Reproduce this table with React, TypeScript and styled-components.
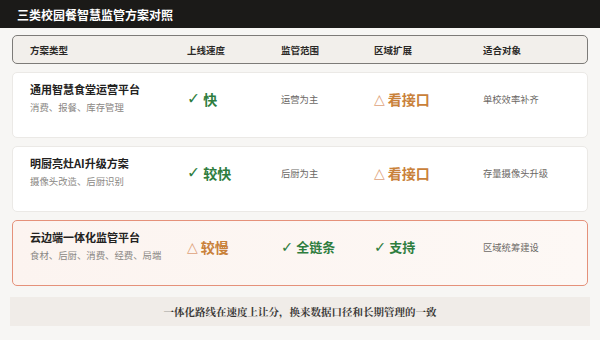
import React from "react";
import styled, { createGlobalStyle } from "styled-components";

const Global = createGlobalStyle`
  html, body { margin: 0; padding: 0; background: #f7f6f4; }
  body { font-family: "Noto Sans CJK SC", "Noto Sans", sans-serif; }
`;

const Page = styled.div`
  width: 600px;
  height: 340px;
  background: #f7f6f4;
  display: flex;
  flex-direction: column;
  overflow: hidden;
`;

const TitleBar = styled.div`
  height: 28px;
  background: #1b1a18;
  color: #ffffff;
  font-size: 12px;
  font-weight: 700;
  display: flex;
  align-items: center;
  padding-left: 17px;
`;

const Body = styled.div`
  display: flex;
  flex-direction: column;
  gap: 8px;
  padding: 7px 12px 0 12px;
`;

const cols = "157px 94px 93px 109px 1fr";

const HeaderRow = styled.div`
  display: grid;
  grid-template-columns: ${cols};
  align-items: center;
  height: 29px;
  box-sizing: border-box;
  padding-left: 17px;
  background: #f2efeb;
  border: 1.5px solid #7d7b78;
  border-radius: 5px;
  font-size: 9.5px;
  font-weight: 700;
  color: #2a2826;
`;

const Row = styled.div<{ $highlight?: boolean }>`
  display: grid;
  grid-template-columns: ${cols};
  align-items: start;
  height: 66px;
  box-sizing: border-box;
  padding: 9px 0 0 17px;
  background: ${(p) =>
    p.$highlight ? "linear-gradient(90deg, #fcf4f0, #fdf8f5)" : "#ffffff"};
  border: ${(p) => (p.$highlight ? "1.5px solid #e5917a" : "1px solid #ebe9e6")};
  border-radius: 5px;
`;

const NameCell = styled.div`
  display: flex;
  flex-direction: column;
  gap: 4px;
`;

const Name = styled.div`
  font-size: 11px;
  font-weight: 700;
  color: #222120;
  line-height: 15px;
`;

const Sub = styled.div`
  font-size: 9.4px;
  color: #8a8784;
  line-height: 13px;
`;

const Status = styled.div<{ $tone: "good" | "warn"; $small?: boolean }>`
  font-size: ${(p) => (p.$small ? "13px" : "14px")};
  font-weight: 700;
  line-height: 20px;
  margin-top: 7px;
  color: ${(p) => (p.$tone === "good" ? "#2e7d3e" : "#c9813a")};
  display: flex;
  align-items: center;
  gap: 3px;
`;

const Mark = styled.span<{ $tone: "good" | "warn" }>`
  font-family: "DejaVu Sans", sans-serif;
  font-weight: ${(p) => (p.$tone === "good" ? 700 : 400)};
  font-size: ${(p) => (p.$tone === "good" ? "1.12em" : "1em")};
  color: ${(p) => (p.$tone === "good" ? "#2e7d3e" : "#dea27a")};
`;

const Plain = styled.div`
  font-size: 9.3px;
  color: #6b6865;
  line-height: 20px;
  margin-top: 7px;
`;

const Footer = styled.div`
  margin: 11px 10px 0 10px;
  height: 29px;
  background: #f0ece8;
  display: flex;
  align-items: center;
  justify-content: center;
  font-family: "Noto Serif CJK SC", "Liberation Serif", serif;
  font-size: 10.5px;
  font-weight: 700;
  color: #3a3836;
`;

type Cell =
  | { kind: "good" | "warn"; text: string; small?: boolean }
  | { kind: "plain"; text: string };

const renderCell = (c: Cell, i: number) =>
  c.kind === "plain" ? (
    <Plain key={i}>{c.text}</Plain>
  ) : (
    <Status key={i} $tone={c.kind} $small={c.small}>
      <Mark $tone={c.kind}>{c.kind === "good" ? "✓" : "△"}</Mark>
      {c.text}
    </Status>
  );

const rows: { name: string; sub: string; cells: Cell[]; hl?: boolean }[] = [
  {
    name: "通用智慧食堂运营平台",
    sub: "消费、报餐、库存管理",
    cells: [
      { kind: "good", text: "快" },
      { kind: "plain", text: "运营为主" },
      { kind: "warn", text: "看接口" },
      { kind: "plain", text: "单校效率补齐" },
    ],
  },
  {
    name: "明厨亮灶AI升级方案",
    sub: "摄像头改造、后厨识别",
    cells: [
      { kind: "good", text: "较快" },
      { kind: "plain", text: "后厨为主" },
      { kind: "warn", text: "看接口" },
      { kind: "plain", text: "存量摄像头升级" },
    ],
  },
  {
    name: "云边端一体化监管平台",
    sub: "食材、后厨、消费、经费、局端",
    hl: true,
    cells: [
      { kind: "warn", text: "较慢" },
      { kind: "good", text: "全链条", small: true },
      { kind: "good", text: "支持", small: true },
      { kind: "plain", text: "区域统筹建设" },
    ],
  },
];

export default function App() {
  return (
    <Page>
      <Global />
      <TitleBar>三类校园餐智慧监管方案对照</TitleBar>
      <Body>
        <HeaderRow>
          <div>方案类型</div>
          <div>上线速度</div>
          <div>监管范围</div>
          <div>区域扩展</div>
          <div>适合对象</div>
        </HeaderRow>
        {rows.map((r) => (
          <Row key={r.name} $highlight={r.hl}>
            <NameCell>
              <Name>{r.name}</Name>
              <Sub>{r.sub}</Sub>
            </NameCell>
            {r.cells.map(renderCell)}
          </Row>
        ))}
      </Body>
      <Footer>一体化路线在速度上让分，换来数据口径和长期管理的一致</Footer>
    </Page>
  );
}
